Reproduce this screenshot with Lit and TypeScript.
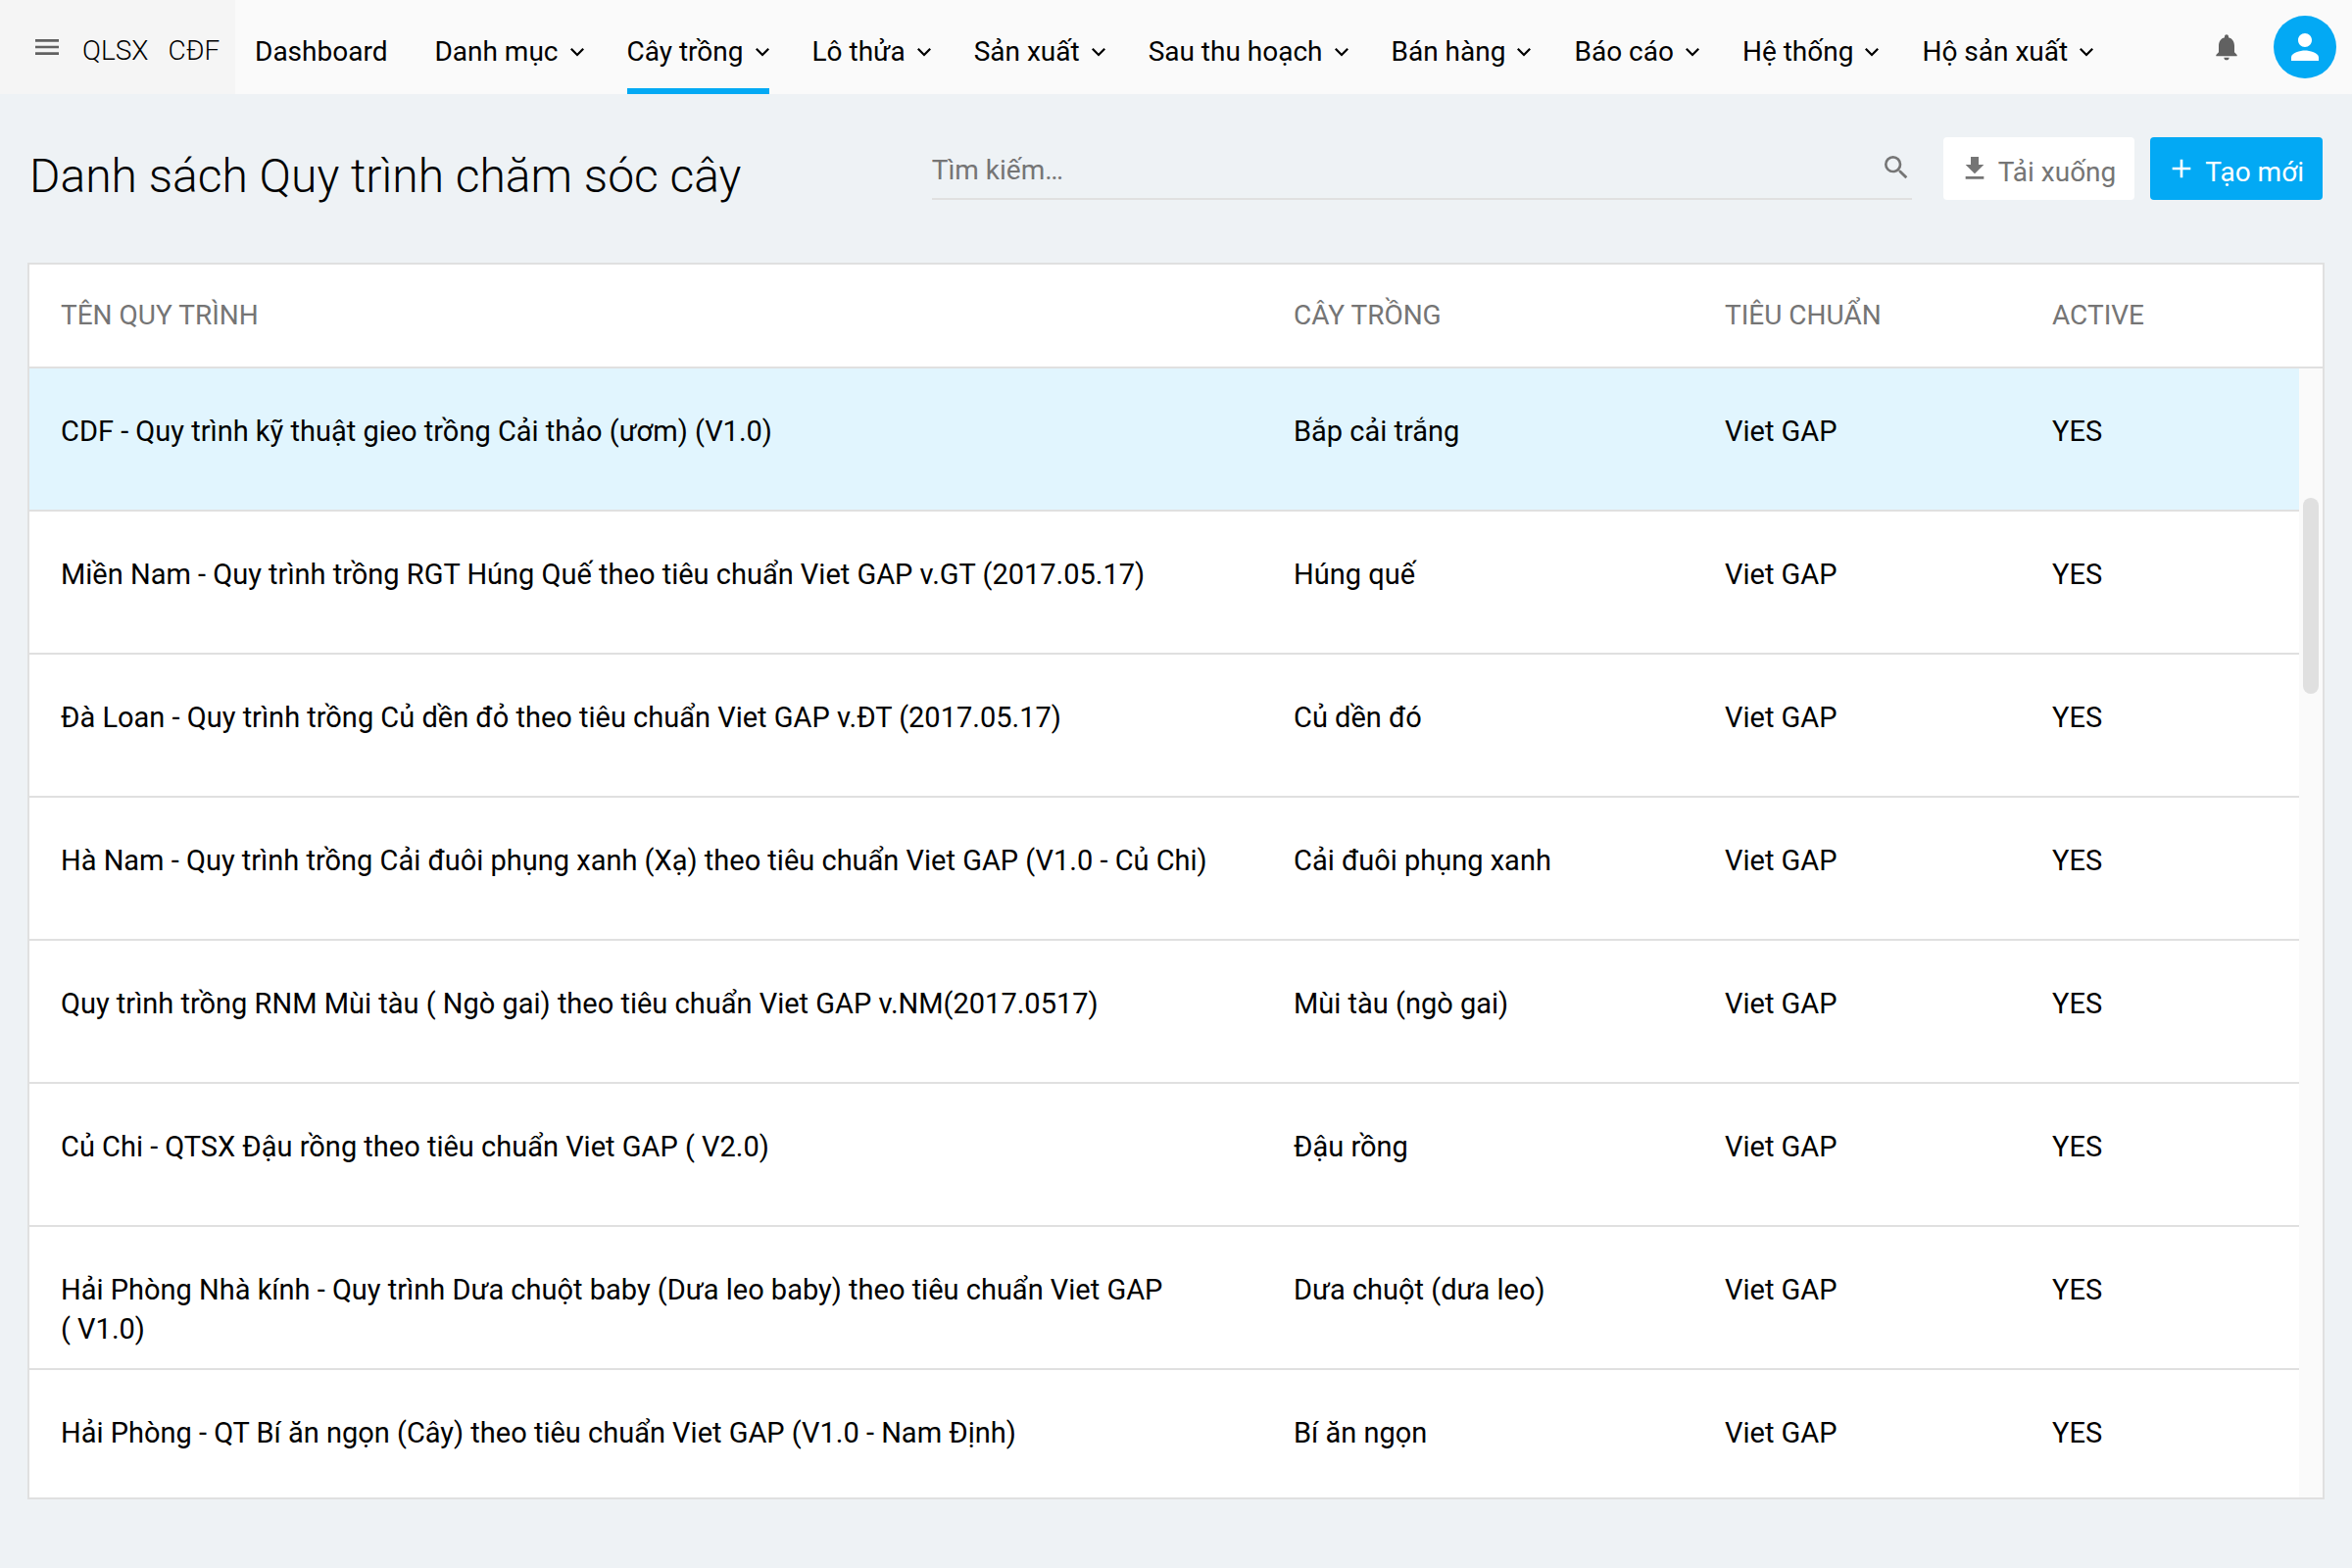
import { LitElement, html, css, svg } from "lit";
import { customElement, property, state } from "lit/decorators.js";
import { classMap } from "lit/directives/class-map.js";

interface Process {
  name: string;
  crop: string;
  standard: string;
  active: string;
}

const MENU: { label: string; sub: boolean }[] = [
  { label: "Dashboard", sub: false },
  { label: "Danh mục", sub: true },
  { label: "Cây trồng", sub: true },
  { label: "Lô thửa", sub: true },
  { label: "Sản xuất", sub: true },
  { label: "Sau thu hoạch", sub: true },
  { label: "Bán hàng", sub: true },
  { label: "Báo cáo", sub: true },
  { label: "Hệ thống", sub: true },
  { label: "Hộ sản xuất", sub: true },
];

const ROWS: Process[] = [
  ["CDF - Quy trình kỹ thuật gieo trồng Cải thảo (ươm) (V1.0)", "Bắp cải trắng"],
  ["Miền Nam - Quy trình trồng RGT Húng Quế theo tiêu chuẩn Viet GAP v.GT (2017.05.17)", "Húng quế"],
  ["Đà Loan - Quy trình trồng Củ dền đỏ theo tiêu chuẩn Viet GAP v.ĐT (2017.05.17)", "Củ dền đó"],
  ["Hà Nam - Quy trình trồng Cải đuôi phụng xanh (Xạ) theo tiêu chuẩn Viet GAP (V1.0 - Củ Chi)", "Cải đuôi phụng xanh"],
  ["Quy trình trồng RNM Mùi tàu ( Ngò gai) theo tiêu chuẩn Viet GAP v.NM(2017.0517)", "Mùi tàu (ngò gai)"],
  ["Củ Chi - QTSX Đậu rồng theo tiêu chuẩn Viet GAP ( V2.0)", "Đậu rồng"],
  ["Hải Phòng Nhà kính - Quy trình Dưa chuột baby (Dưa leo baby) theo tiêu chuẩn Viet GAP (\u00a0V1.0)", "Dưa chuột (dưa leo)"],
  ["Hải Phòng - QT Bí ăn ngọn (Cây) theo tiêu chuẩn Viet GAP (V1.0 - Nam Định)", "Bí ăn ngọn"],
].map(([name, crop]) => ({ name, crop, standard: "Viet GAP", active: "YES" }));

const ICONS = {
  menu: svg`<path d="M3 18h18v-2H3v2zm0-5h18v-2H3v2zm0-7v2h18V6H3z"/>`,
  bell: svg`<path d="M12 22c1.1 0 2-.9 2-2h-4c0 1.1.9 2 2 2zm6-6v-5c0-3.07-1.63-5.64-4.5-6.32V4c0-.83-.67-1.5-1.5-1.5s-1.5.67-1.5 1.5v.68C7.64 5.36 6 7.92 6 11v5l-2 2v1h16v-1l-2-2z"/>`,
  person: svg`<path d="M12 12c2.21 0 4-1.79 4-4s-1.79-4-4-4-4 1.79-4 4 1.79 4 4 4zm0 2c-2.67 0-8 1.34-8 4v2h16v-2c0-2.66-5.33-4-8-4z"/>`,
  search: svg`<path d="M15.5 14h-.79l-.28-.27A6.47 6.47 0 0 0 16 9.5 6.5 6.5 0 1 0 9.5 16c1.61 0 3.09-.59 4.23-1.57l.27.28v.79l5 4.99L20.49 19l-4.99-5zm-6 0C7.01 14 5 11.99 5 9.5S7.01 5 9.5 5 14 7.01 14 9.5 11.99 14 9.5 14z"/>`,
  download: svg`<path d="M19 9h-4V3H9v6H5l7 7 7-7zM5 18v2h14v-2H5z"/>`,
  plus: svg`<path d="M19 13h-6v6h-2v-6H5v-2h6V5h2v6h6v2z"/>`,
};

@customElement("ui-icon")
export class UiIcon extends LitElement {
  @property() name: keyof typeof ICONS = "menu";

  static styles = css`
    :host { display: block; flex: none; width: 32px; height: 32px; }
    .glyph { display: block; width: 100%; height: 100%; fill: currentColor; }
  `;

  render() {
    return html`<svg class="glyph" viewBox="0 0 24 24" aria-hidden="true">${ICONS[this.name]}</svg>`;
  }
}

@customElement("top-bar")
export class TopBar extends LitElement {
  @state() private current = "Cây trồng";

  static styles = css`
    :host { display: block; }
    .bar { display: flex; height: 96px; background: #fafafa; }
    .brand { display: flex; align-items: center; gap: 20px; box-sizing: border-box; width: 240px; padding: 0 12px 0 32px; background: #f5f5f5; }
    .name { padding-top: 8px; font-size: 28px; line-height: 32px; font-weight: 300; color: #000; }
    .plain { display: flex; align-items: center; padding: 0; border: 0; background: none; color: #616161; font: inherit; cursor: pointer; }
    .menu { display: flex; flex: 1; gap: 44px; margin: 0; padding: 0 20px; list-style: none; }
    .item { display: flex; }
    .link { display: flex; align-items: center; gap: 12px; box-sizing: border-box; padding-top: 16px; border-bottom: 6px solid transparent; color: #000; font-size: 28px; line-height: 32px; text-decoration: none; white-space: nowrap; }
    .link.on { border-bottom-color: #03a9f4; }
    .link.solo { padding-right: 4px; }
    .chevron { display: block; flex: none; width: 14px; height: 9px; fill: currentColor; }
    .tools { display: flex; align-items: center; gap: 32px; padding-right: 16px; }
    .avatar { display: flex; align-items: center; justify-content: center; width: 64px; height: 64px; padding: 0; border: 0; border-radius: 50%; background: #03a9f4; color: #fff; cursor: pointer; }
    .face { width: 42px; height: 42px; }
  `;

  render() {
    const chevron = html`<svg class="chevron" viewBox="0 0 14 9" aria-hidden="true"><path d="M0 1.6 1.6 0 7 5.4 12.4 0 14 1.6 7 8.6z" /></svg>`;
    return html`
      <header class="bar">
        <div class="brand">
          <button class="plain" aria-label="Menu"><ui-icon name="menu"></ui-icon></button>
          <span class="name">QLSX</span>
          <span class="name">CĐF</span>
        </div>
        <ul class="menu">
          ${MENU.map(
            (m) => html`<li class="item">
              <a href="#" class=${classMap({ link: true, solo: !m.sub, on: m.label === this.current })} @click=${() => (this.current = m.label)}>
                ${m.label}${m.sub ? chevron : ""}
              </a>
            </li>`
          )}
        </ul>
        <div class="tools">
          <button class="plain" aria-label="Thông báo"><ui-icon name="bell"></ui-icon></button>
          <button class="avatar" aria-label="Tài khoản"><ui-icon class="face" name="person"></ui-icon></button>
        </div>
      </header>
    `;
  }
}

@customElement("process-table")
export class ProcessTable extends LitElement {
  @property({ attribute: false }) rows: Process[] = [];
  @state() private selected = 0;

  static styles = css`
    :host { display: flex; flex-direction: column; min-height: 0; border: 2px solid #e0e0e0; background: #fff; }
    .body { position: relative; flex: 1; min-height: 0; overflow: hidden; }
    .grid { width: 100%; table-layout: fixed; border-collapse: separate; border-spacing: 0; line-height: 40px; color: #000; }
    .crop { width: 440px; }
    .standard { width: 334px; }
    .active { width: 308px; }
    .head { height: 106px; box-sizing: border-box; padding: 0 32px; border-bottom: 2px solid #e0e0e0; color: #757575; font-size: 28px; font-weight: 400; text-align: left; vertical-align: middle; }
    .cell { box-sizing: border-box; height: 146px; padding: 44px 40px 0 32px; border-bottom: 2px solid #e0e0e0; font-size: 29px; vertical-align: top; }
    .picked .cell { background: #e1f5fe; }
    .row:last-child .cell { border-bottom: 0; }
    .rail { position: absolute; top: 106px; right: 0; bottom: 0; width: 24px; background: #fafafa; }
    .thumb { position: absolute; top: 132px; left: 4px; width: 16px; height: 200px; border-radius: 8px; background: #e0e0e0; }
  `;

  render() {
    return html`
      <div class="body">
        <table class="grid">
          <colgroup>
            <col /><col class="crop" /><col class="standard" /><col class="active" />
          </colgroup>
          <thead>
            <tr>
              <th class="head" scope="col">TÊN QUY TRÌNH</th>
              <th class="head" scope="col">CÂY TRỒNG</th>
              <th class="head" scope="col">TIÊU CHUẨN</th>
              <th class="head" scope="col">ACTIVE</th>
            </tr>
          </thead>
          <tbody>
            ${this.rows.map(
              (r, i) => html`<tr class=${classMap({ row: true, picked: i === this.selected })} @click=${() => (this.selected = i)}>
                <td class="cell">${r.name}</td>
                <td class="cell">${r.crop}</td>
                <td class="cell">${r.standard}</td>
                <td class="cell">${r.active}</td>
              </tr>`
            )}
          </tbody>
        </table>
        <div class="rail"><div class="thumb"></div></div>
      </div>
    `;
  }
}

@customElement("app-root")
export class AppRoot extends LitElement {
  static styles = css`
    :host { display: flex; flex-direction: column; box-sizing: border-box; height: 100vh; background: #eef2f5; font-family: Roboto, "Liberation Sans", sans-serif; }
    .tools { display: flex; align-items: flex-start; gap: 16px; height: 64px; margin: 44px 30px 0; }
    .title { flex: 1; margin: 0; padding-top: 8px; font-size: 48px; line-height: 64px; font-weight: 300; color: #000; white-space: nowrap; }
    .search { display: flex; align-items: center; box-sizing: border-box; width: 1000px; height: 64px; margin-right: 16px; border-bottom: 2px solid #e0e0e0; color: #757575; }
    .field { flex: 1; min-width: 0; padding: 6px 0 0; border: 0; outline: 0; background: none; color: #000; font: 400 28px/40px Roboto, "Liberation Sans", sans-serif; }
    .field::placeholder { color: #757575; opacity: 1; }
    .button { display: flex; align-items: center; gap: 8px; height: 64px; padding: 0 19px 0 16px; border: 0; border-radius: 4px; background: #fff; color: #757575; font: 400 28px/40px Roboto, "Liberation Sans", sans-serif; white-space: nowrap; cursor: pointer; }
    .primary { background: #03a9f4; color: #fff; }
    .label { padding-top: 8px; }
    .list { flex: 1; margin: 64px 28px 70px; }
  `;

  render() {
    return html`
      <top-bar></top-bar>
      <section class="tools">
        <h1 class="title">Danh sách Quy trình chăm sóc cây</h1>
        <label class="search">
          <input class="field" type="text" placeholder="Tìm kiếm…" aria-label="Tìm kiếm" />
          <ui-icon name="search"></ui-icon>
        </label>
        <button class="button"><ui-icon name="download"></ui-icon><span class="label">Tải xuống</span></button>
        <button class="button primary"><ui-icon name="plus"></ui-icon><span class="label">Tạo mới</span></button>
      </section>
      <process-table class="list" .rows=${ROWS}></process-table>
    `;
  }
}
